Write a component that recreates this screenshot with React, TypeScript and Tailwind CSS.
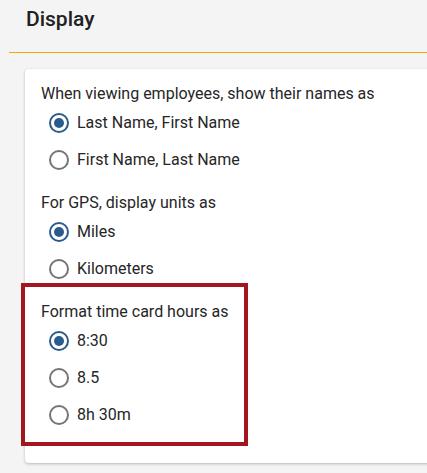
import React from 'react';

type Group = {
  label: string;
  options: string[];
  selected: number;
  highlight?: boolean;
};

const groups: Group[] = [
  {
    label: 'When viewing employees, show their names as',
    options: ['Last Name, First Name', 'First Name, Last Name'],
    selected: 0,
  },
  {
    label: 'For GPS, display units as',
    options: ['Miles', 'Kilometers'],
    selected: 0,
  },
  {
    label: 'Format time card hours as',
    options: ['8:30', '8.5', '8h 30m'],
    selected: 0,
    highlight: true,
  },
];

function Radio({ checked }: { checked: boolean }) {
  return (
    <span
      className={`flex h-5 w-5 items-center justify-center rounded-full border-2 ${
        checked ? 'border-[#2a5b8c]' : 'border-[#757575]'
      }`}
    >
      {checked && <span className="h-[10px] w-[10px] rounded-full bg-[#2a5b8c]" />}
    </span>
  );
}

function OptionGroup({ group }: { group: Group }) {
  return (
    <div className="relative">
      {group.highlight && (
        <div className="pointer-events-none absolute -left-[20px] -top-[19px] h-[163px] w-[227px] border-4 border-[#a3161f]" />
      )}
      <div className="text-[16px] leading-5 text-[#262626]">{group.label}</div>
      {group.options.map((opt, i) => (
        <label key={opt} className="flex h-[37px] items-center gap-[8px] pl-[8px] text-[16px] text-[#262626]">
          <Radio checked={i === group.selected} />
          <span>{opt}</span>
        </label>
      ))}
    </div>
  );
}

export default function App(): React.ReactNode {
  return (
    <div className="min-h-screen overflow-hidden bg-[#f4f4f4] font-['Roboto',sans-serif]">
      <div className="h-[52px] pl-[26px] pt-[5px] text-[21px] font-medium leading-7 text-[#212121]">
        Display
      </div>
      <div className="ml-[9px] h-px bg-[#f5a700]" />
      <div className="pl-[25px] pt-[16px]">
        <div className="w-[440px] rounded bg-white pb-[30px] pl-[16px] pt-[15px] shadow-[0_1px_3px_rgba(0,0,0,0.25)]">
          <div className="flex flex-col gap-[15px]">
            {groups.map((g) => (
              <OptionGroup key={g.label} group={g} />
            ))}
          </div>
        </div>
      </div>
    </div>
  );
}
